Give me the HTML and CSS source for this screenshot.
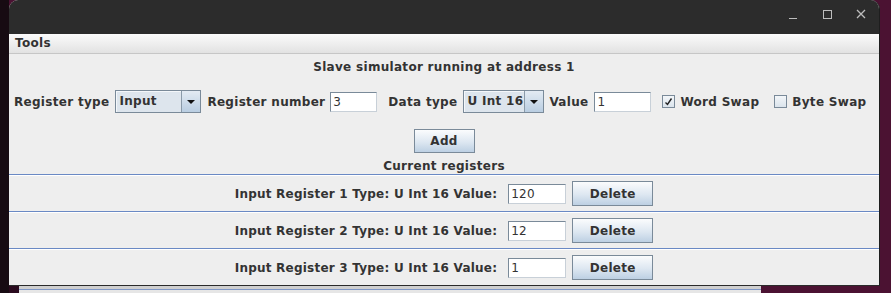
FILE: index.html
```html
<!DOCTYPE html>
<html>
<head>
<meta charset="utf-8">
<link rel="stylesheet" href="styles.css">
</head>
<body>
<div class="screen">
  <div class="top">
    <div class="desk-left"></div>
    <div class="window">
      <div class="titlebar">
        <svg class="wicon" width="10" height="10" viewBox="0 0 10 10"><path d="M1 9.5H9" stroke="#bdbdbd" stroke-width="1"/></svg>
        <svg class="wicon" width="10" height="10" viewBox="0 0 10 10"><rect x="1.5" y="1.5" width="8" height="8" fill="none" stroke="#bdbdbd" stroke-width="1"/></svg>
        <svg class="wicon" width="10" height="10" viewBox="0 0 10 10"><path d="M1 1L9 9M9 1L1 9" stroke="#bdbdbd" stroke-width="1.3"/></svg>
      </div>
      <div class="menubar"><span class="menu">Tools</span></div>
      <div class="content">
        <div class="header">Slave simulator running at address 1</div>
        <div class="controls">
          <span class="lbl lbl-first">Register type</span>
          <div class="combo combo-reg"><span class="combo-text">Input</span><span class="combo-btn"><span class="arrow"></span></span></div>
          <span class="lbl lbl-num">Register number</span>
          <div class="field field-num">3</div>
          <span class="lbl lbl-data">Data type</span>
          <div class="combo combo-data"><span class="combo-text">U Int 16</span><span class="combo-btn"><span class="arrow"></span></span></div>
          <span class="lbl">Value</span>
          <div class="field field-val">1</div>
          <label class="check check-word"><span class="box checked">
            <svg width="11" height="11" viewBox="0 0 11 11"><path d="M2.5 6.5L4.5 8.5L8.5 2.5" fill="none" stroke="#222" stroke-width="1.4"/></svg>
          </span>Word Swap</label>
          <label class="check check-byte"><span class="box"></span>Byte Swap</label>
        </div>
        <div class="add-row"><button class="btn btn-add">Add</button></div>
        <div class="current">Current registers</div>
        <div class="reg-list">
          <div class="reg-row"><span class="reg-lbl">Input Register 1 Type: U Int 16 Value:</span><div class="field field-reg">120</div><button class="btn btn-del">Delete</button></div>
          <div class="reg-row"><span class="reg-lbl">Input Register 2 Type: U Int 16 Value:</span><div class="field field-reg">12</div><button class="btn btn-del">Delete</button></div>
          <div class="reg-row"><span class="reg-lbl">Input Register 3 Type: U Int 16 Value:</span><div class="field field-reg">1</div><button class="btn btn-del">Delete</button></div>
        </div>
      </div>
    </div>
  </div>
  <div class="bottom">
    <div class="bl-a"></div>
    <div class="bl-b"></div>
    <div class="back-window"></div>
  </div>
</div>
</body>
</html>
```
FILE: styles.css
```css
html, body {
  margin: 0;
  padding: 0;
}
body {
  background: #4b1232;
  font-family: "DejaVu Sans", "Liberation Sans", sans-serif;
  font-size: 12px;
  font-weight: bold;
  letter-spacing: 0.3px;
  color: #333333;
  width: 891px;
  height: 293px;
  overflow: hidden;
}
.screen {
  display: flex;
  flex-direction: column;
}
.top {
  display: flex;
  height: 286px;
}
.desk-left {
  width: 9px;
  background: #170b12;
}
.window {
  width: 870px;
  height: 285px;
  background: #eeeeee;
  border-radius: 9px 9px 0 0;
  border-right: 1px solid #1e1e1e;
  border-bottom: 1px solid #2a2a2a;
  overflow: hidden;
  display: flex;
  flex-direction: column;
}
.titlebar {
  height: 34px;
  background: #2c2c2c;
  display: flex;
  justify-content: flex-end;
  align-items: flex-start;
  gap: 24px;
  padding-right: 13px;
  box-sizing: border-box;
  padding-top: 9px;
}
.wicon {
  display: block;
}
.menubar {
  height: 19px;
  background: linear-gradient(#fbfbfb, #e2e2e2);
  border-bottom: 1px solid #c6c6c6;
  display: flex;
  align-items: center;
  padding-left: 6px;
}
.menu {
  line-height: 15px;
}
.content {
  flex: 1;
  display: flex;
  flex-direction: column;
}
.header {
  text-align: center;
  line-height: 15px;
  margin-top: 6px;
}
.controls {
  display: flex;
  align-items: center;
  height: 23px;
  margin-top: 15px;
}
.lbl {
  margin-left: 5px;
  white-space: nowrap;
}
.lbl-first {
  margin-left: 5px;
}
.lbl-num {
  margin-left: 6px;
}
.lbl-data {
  margin-left: 11px;
}
.combo {
  margin-left: 5px;
  height: 23px;
  box-sizing: border-box;
  border: 1px solid #7a8a99;
  background: #dde5ed;
  display: flex;
  box-shadow: inset 1px 1px 0 #f4f7fa;
}
.combo-reg { width: 86px; margin-left: 6px; }
.combo-data { width: 81px; margin-left: 6px; }
.combo-text {
  flex: 1;
  padding-left: 3px;
  line-height: 21px;
  color: #333;
  white-space: nowrap;
}
.combo-btn {
  width: 18px;
  border-left: 1px solid #8a9aa9;
  background: linear-gradient(#e3ebf3, #b9cde1);
  display: flex;
  align-items: center;
  justify-content: center;
}
.arrow {
  width: 0;
  height: 0;
  border-left: 4px solid transparent;
  border-right: 4px solid transparent;
  border-top: 4px solid #111;
}
.field {
  margin-left: 5px;
  height: 20px;
  box-sizing: border-box;
  background: #ffffff;
  border-top: 1px solid #7a8a99;
  border-left: 1px solid #7a8a99;
  border-bottom: 1px solid #c8d0d8;
  border-right: 1px solid #c8d0d8;
  font-weight: normal;
  font-size: 12px;
  letter-spacing: 0.2px;
  line-height: 18px;
  padding-left: 2px;
  color: #333;
}
.field-num { width: 47px; }
.field-val { width: 57px; margin-left: 6px; }
.check {
  display: flex;
  align-items: center;
  white-space: nowrap;
}
.check-word { margin-left: 11px; }
.check-byte { margin-left: 15px; }
.box {
  width: 13px;
  height: 13px;
  box-sizing: border-box;
  border: 1px solid #7a8a99;
  background: linear-gradient(#f3f6f9, #dbe4ec);
  margin-right: 5px;
  display: flex;
  align-items: center;
  justify-content: center;
}
.box svg { display: block; }
.add-row {
  display: flex;
  justify-content: center;
  margin-top: 16px;
}
.btn {
  font-family: "DejaVu Sans", "Liberation Sans", sans-serif;
  font-size: 12px;
  font-weight: bold;
  letter-spacing: 0.3px;
  color: #333;
  border: 1px solid #7a8a99;
  background: linear-gradient(#fbfcfd, #dde7f1 55%, #bdd0e3);
  padding: 0;
  margin: 0;
  box-sizing: border-box;
}
.btn-add {
  width: 61px;
  height: 24px;
}
.current {
  text-align: center;
  line-height: 15px;
  margin-top: 6px;
}
.reg-list {
  display: flex;
  flex-direction: column;
}
.reg-row {
  height: 37px;
  box-sizing: border-box;
  border-top: 1px solid #6a89c4;
  box-shadow: inset 0 1px 0 #ffffff;
  padding-top: 1px;
  display: flex;
  align-items: center;
  justify-content: center;
}
.reg-lbl {
  white-space: nowrap;
  letter-spacing: 0.22px;
}
.field-reg {
  width: 58px;
  margin-left: 11px;
}
.btn-del {
  width: 81px;
  height: 25px;
  margin-left: 6px;
}
.bottom {
  display: flex;
  height: 7px;
}
.bl-a {
  width: 9px;
  background: #170b12;
}
.bl-b {
  width: 10px;
  background: #2a0b1e;
}
.back-window {
  width: 742px;
  background: #e6e6e6;
  border-top: 2px solid #cfcfcf;
  box-shadow: inset 0 1px 0 #cfcfcf, inset 0 2px 0 #7f97c8;
  box-sizing: border-box;
}
```
